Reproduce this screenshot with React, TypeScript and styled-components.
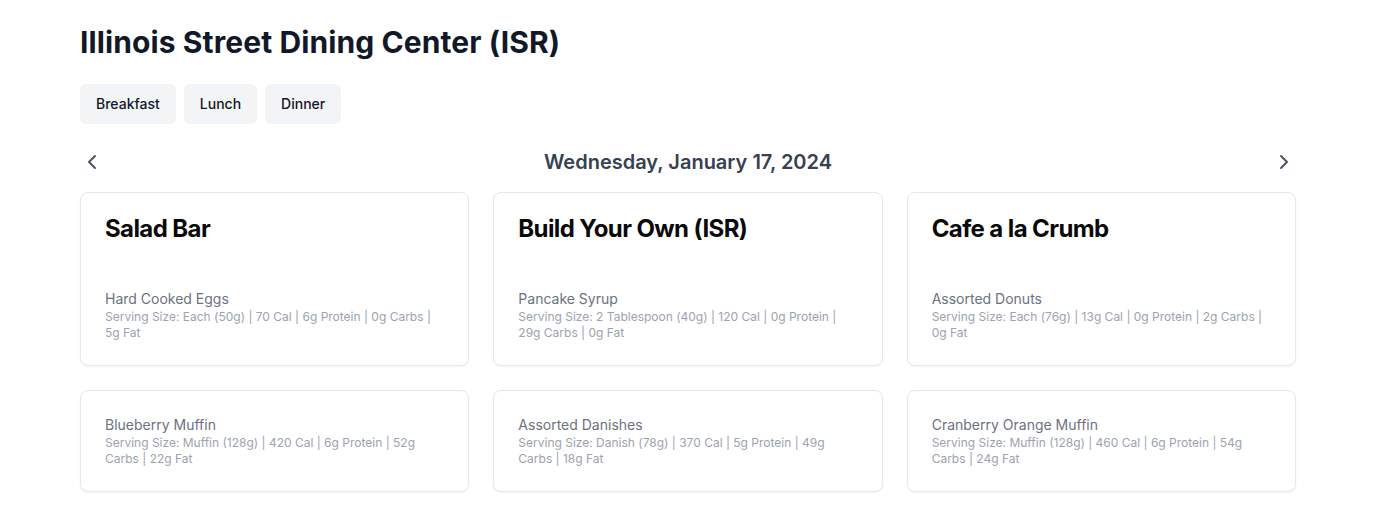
import React from "react";
import styled, { createGlobalStyle } from "styled-components";

const Global = createGlobalStyle`
  html, body { margin: 0; padding: 0; background: #ffffff; }
  body { font-family: Inter, "Noto Sans", sans-serif; color: #111827; -webkit-font-smoothing: antialiased; }
  * { box-sizing: border-box; }
`;

const Page = styled.main`
  max-width: 1216px;
  margin: 0 auto;
  padding: 24px 0 24px;
`;

const Title = styled.h1`
  margin: 0;
  font-size: 30px;
  line-height: 36px;
  font-weight: 700;
  color: #111827;
  letter-spacing: 0.1px;
`;

const Tabs = styled.div`
  display: flex;
  gap: 8px;
  margin-top: 24px;
`;

const Tab = styled.button`
  height: 40px;
  padding: 0 16px 1px;
  border: none;
  border-radius: 6px;
  background: #f3f4f6;
  font-family: inherit;
  font-size: 14px;
  font-weight: 500;
  color: #111827;
  cursor: pointer;
`;

const DateRow = styled.div`
  display: flex;
  align-items: center;
  justify-content: space-between;
  height: 28px;
  margin-top: 24px;
`;

const NavButton = styled.button`
  display: flex;
  align-items: center;
  justify-content: center;
  width: 24px;
  height: 24px;
  padding: 0;
  border: none;
  background: none;
  color: #4b5563;
  cursor: pointer;
`;

const DateLabel = styled.h2`
  margin: 0;
  font-size: 20px;
  line-height: 28px;
  font-weight: 600;
  color: #374151;
`;

const Grid = styled.div`
  display: grid;
  grid-template-columns: repeat(3, 1fr);
  gap: 24px;
  margin-top: 16px;
`;

const Card = styled.section`
  border: 1px solid #e5e7eb;
  border-radius: 8px;
  background: #fff;
  box-shadow: 0 1px 2px rgba(0, 0, 0, 0.05);
  padding: 24px;
`;

const StationName = styled.h3`
  margin: 0 0 48px;
  font-size: 24px;
  line-height: 24px;
  font-weight: 700;
  letter-spacing: -0.6px;
  color: #0a0a0a;
`;

const ItemName = styled.div`
  font-size: 14px;
  line-height: 20px;
  color: #6b7280;
`;

const ItemInfo = styled.div`
  font-size: 12px;
  line-height: 16px;
  color: #9ca3af;
`;

const Chevron = ({ dir }: { dir: "left" | "right" }) => (
  <svg width="24" height="24" viewBox="0 0 24 24" fill="none" stroke="currentColor" strokeWidth="2" strokeLinecap="round" strokeLinejoin="round">
    <path d={dir === "left" ? "m15 18-6-6 6-6" : "m9 18 6-6-6-6"} />
  </svg>
);

type Item = { station?: string; name: string; info: string };

const items: Item[] = [
  { station: "Salad Bar", name: "Hard Cooked Eggs", info: "Serving Size: Each (50g) | 70 Cal | 6g Protein | 0g Carbs | 5g Fat" },
  { station: "Build Your Own (ISR)", name: "Pancake Syrup", info: "Serving Size: 2 Tablespoon (40g) | 120 Cal | 0g Protein | 29g Carbs | 0g Fat" },
  { station: "Cafe a la Crumb", name: "Assorted Donuts", info: "Serving Size: Each (76g) | 13g Cal | 0g Protein | 2g Carbs | 0g Fat" },
  { name: "Blueberry Muffin", info: "Serving Size: Muffin (128g) | 420 Cal | 6g Protein | 52g Carbs | 22g Fat" },
  { name: "Assorted Danishes", info: "Serving Size: Danish (78g) | 370 Cal | 5g Protein | 49g Carbs | 18g Fat" },
  { name: "Cranberry Orange Muffin", info: "Serving Size: Muffin (128g) | 460 Cal | 6g Protein | 54g Carbs | 24g Fat" },
];

export default function App() {
  return (
    <>
      <Global />
      <Page>
        <Title>Illinois Street Dining Center (ISR)</Title>
        <Tabs>
          <Tab>Breakfast</Tab>
          <Tab>Lunch</Tab>
          <Tab>Dinner</Tab>
        </Tabs>
        <DateRow>
          <NavButton aria-label="Previous day"><Chevron dir="left" /></NavButton>
          <DateLabel>Wednesday, January 17, 2024</DateLabel>
          <NavButton aria-label="Next day"><Chevron dir="right" /></NavButton>
        </DateRow>
        <Grid>
          {items.map((it) => (
            <Card key={it.name}>
              {it.station && <StationName>{it.station}</StationName>}
              <ItemName>{it.name}</ItemName>
              <ItemInfo>{it.info}</ItemInfo>
            </Card>
          ))}
        </Grid>
      </Page>
    </>
  );
}
